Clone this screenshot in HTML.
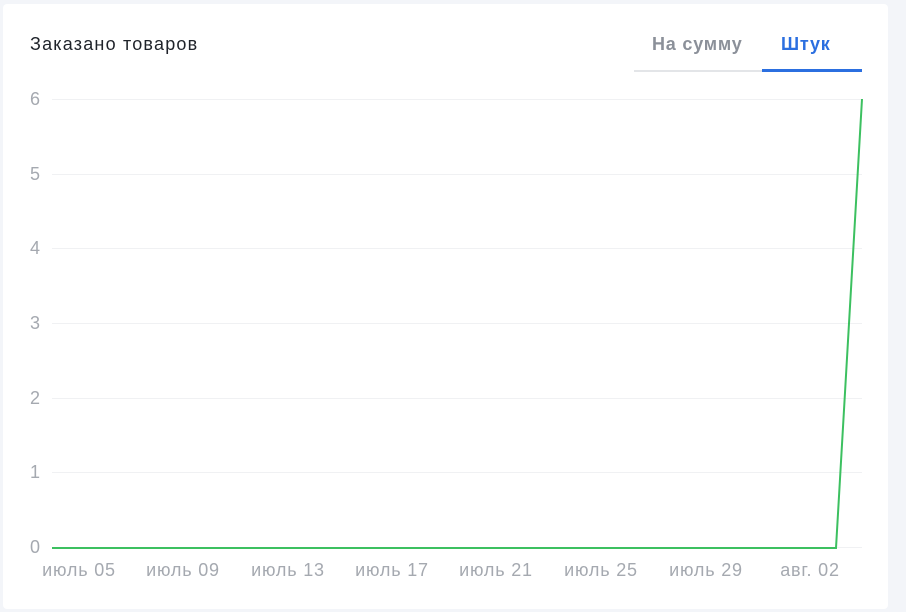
<!DOCTYPE html>
<html><head><meta charset="utf-8"><style>
body{margin:0;width:906px;height:612px;background:#f3f5f9;font-family:"Liberation Sans",sans-serif;overflow:hidden;position:relative}
.card{position:absolute;left:3px;top:4px;width:885px;height:605px;background:#fff;border-radius:4px}
.t{position:absolute;left:30px;top:34px;font-size:18px;color:#1f232a;letter-spacing:1.2px}
.tab{position:absolute;top:34px;font-size:18px;font-weight:bold;letter-spacing:0.8px}
</style></head><body>
<div class="card"></div>
<div class="t">Заказано товаров</div>
<div class="tab" style="left:652px;color:#8b9099">На сумму</div>
<div class="tab" style="left:781px;color:#2b6fe0">Штук</div>
<div style="position:absolute;left:634px;top:70px;width:128px;height:2px;background:#e3e5e8"></div>
<div style="position:absolute;left:762px;top:69px;width:100px;height:3px;background:#2b6fe0"></div>
<svg width="906" height="612" style="position:absolute;left:0;top:0">
<g stroke="#f0f1f3" stroke-width="1">
<line x1="52" y1="99.5" x2="862" y2="99.5"/><line x1="52" y1="174.5" x2="862" y2="174.5"/>
<line x1="52" y1="248.5" x2="862" y2="248.5"/><line x1="52" y1="323.5" x2="862" y2="323.5"/>
<line x1="52" y1="398.5" x2="862" y2="398.5"/><line x1="52" y1="472.5" x2="862" y2="472.5"/>
<line x1="52" y1="547.5" x2="862" y2="547.5"/>
</g>
<g font-family="Liberation Sans,sans-serif" font-size="18" fill="#a5a9b0">
<text x="30" y="105">6</text><text x="30" y="180">5</text><text x="30" y="254">4</text>
<text x="30" y="329">3</text><text x="30" y="404">2</text><text x="30" y="478">1</text>
<text x="30" y="553">0</text>
</g>
<g font-family="Liberation Sans,sans-serif" font-size="18" fill="#a5a9b0" text-anchor="middle" letter-spacing="0.8">
<text x="79" y="576">июль 05</text><text x="183" y="576">июль 09</text><text x="288" y="576">июль 13</text>
<text x="392" y="576">июль 17</text><text x="496" y="576">июль 21</text><text x="601" y="576">июль 25</text>
<text x="706" y="576">июль 29</text><text x="810" y="576">авг. 02</text>
</g>
<polyline points="52,548 836,548 862,99" fill="none" stroke="#3cc060" stroke-width="2"/>
</svg>
</body></html>
